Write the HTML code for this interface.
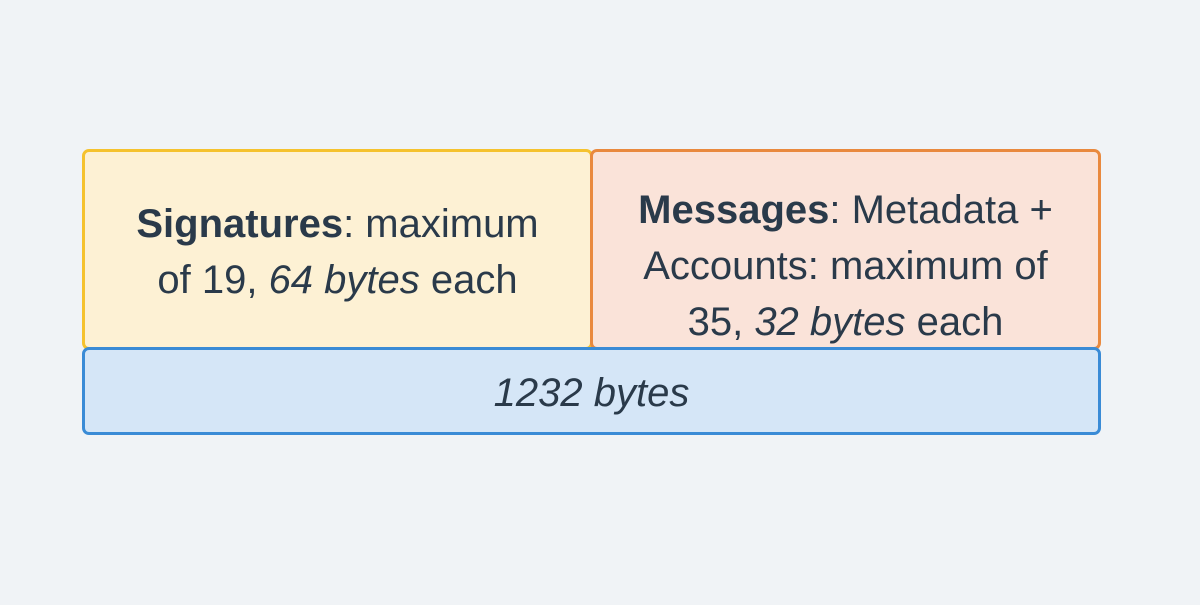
<!DOCTYPE html>
<html><head><style>
body{margin:0;width:1200px;height:605px;background:#f0f3f6;position:relative;font-family:"Liberation Sans",sans-serif;color:#2a3a4a;overflow:hidden}
.b{position:absolute;box-sizing:border-box;border:3px solid;border-radius:7px;text-align:center;font-size:40px;line-height:56px;letter-spacing:0;white-space:nowrap}
#s{left:82px;top:149px;width:511px;height:201px;background:#fdf1d4;border-color:#f5c22e;padding-top:44px}
#m{left:590px;top:149px;width:511px;height:201px;background:#fae3d9;border-color:#e9893e;padding-top:30px;overflow:visible}
#t{left:82px;top:347px;width:1019px;height:88px;background:#d5e6f7;border-color:#3a8bd6;line-height:86px;font-style:italic}
b{font-weight:bold}
</style></head><body>
<div class="b" id="s"><b>Signatures</b>: maximum<br>of 19, <i>64 bytes</i> each</div>
<div class="b" id="m"><b>Messages</b>: Metadata +<br>Accounts: maximum of<br>35, <i>32 bytes</i> each</div>
<div class="b" id="t">1232 bytes</div>
</body></html>
